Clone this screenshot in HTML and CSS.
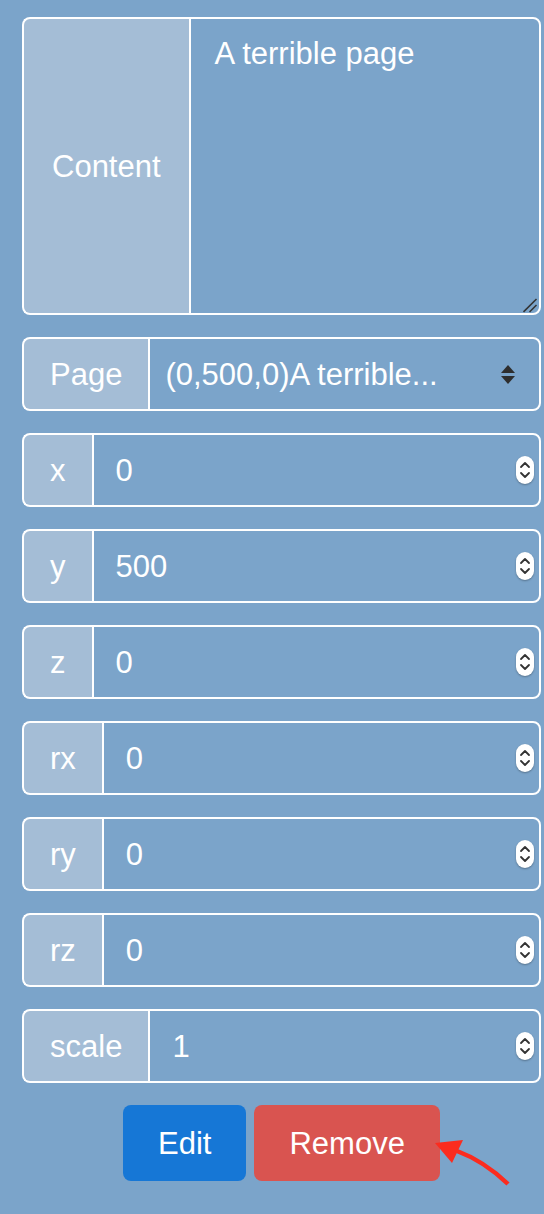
FILE: index.html
```html
<!DOCTYPE html>
<html lang="en">
<head>
<meta charset="utf-8">
<title>Element editor</title>
<link rel="stylesheet" href="styles.css">
</head>
<body>
<div class="panel">
  <div class="group group-area">
    <div class="addon">Content</div>
    <div class="field area">
      <span class="value">A terrible page</span>
      <svg class="resizer" width="16" height="16" viewBox="0 0 16 16" aria-hidden="true">
        <line x1="0.5" y1="15" x2="13.5" y2="2" stroke="#333" stroke-width="1.6"/>
        <line x1="6.5" y1="15" x2="13.5" y2="8" stroke="#333" stroke-width="1.6"/>
      </svg>
    </div>
  </div>

  <div class="group">
    <div class="addon">Page</div>
    <div class="field select">
      <span class="value">(0,500,0)A terrible...</span>
      <svg class="caret" width="16" height="20" viewBox="0 0 16 20" aria-hidden="true">
        <polygon points="1,9 8,1 15,9" fill="#2e2e2e"/>
        <polygon points="1,12 15,12 8,20" fill="#2e2e2e"/>
      </svg>
    </div>
  </div>

  <div class="group">
    <div class="addon">x</div>
    <div class="field number"><span class="value">0</span><span class="spin"><svg width="18" height="28" viewBox="0 0 18 28" aria-hidden="true"><polyline points="5,11 9,7 13,11" /><polyline points="5,17 9,21 13,17" /></svg></span></div>
  </div>
  <div class="group">
    <div class="addon">y</div>
    <div class="field number"><span class="value">500</span><span class="spin"><svg width="18" height="28" viewBox="0 0 18 28" aria-hidden="true"><polyline points="5,11 9,7 13,11" /><polyline points="5,17 9,21 13,17" /></svg></span></div>
  </div>
  <div class="group">
    <div class="addon">z</div>
    <div class="field number"><span class="value">0</span><span class="spin"><svg width="18" height="28" viewBox="0 0 18 28" aria-hidden="true"><polyline points="5,11 9,7 13,11" /><polyline points="5,17 9,21 13,17" /></svg></span></div>
  </div>
  <div class="group">
    <div class="addon">rx</div>
    <div class="field number"><span class="value">0</span><span class="spin"><svg width="18" height="28" viewBox="0 0 18 28" aria-hidden="true"><polyline points="5,11 9,7 13,11" /><polyline points="5,17 9,21 13,17" /></svg></span></div>
  </div>
  <div class="group">
    <div class="addon">ry</div>
    <div class="field number"><span class="value">0</span><span class="spin"><svg width="18" height="28" viewBox="0 0 18 28" aria-hidden="true"><polyline points="5,11 9,7 13,11" /><polyline points="5,17 9,21 13,17" /></svg></span></div>
  </div>
  <div class="group">
    <div class="addon">rz</div>
    <div class="field number"><span class="value">0</span><span class="spin"><svg width="18" height="28" viewBox="0 0 18 28" aria-hidden="true"><polyline points="5,11 9,7 13,11" /><polyline points="5,17 9,21 13,17" /></svg></span></div>
  </div>
  <div class="group">
    <div class="addon">scale</div>
    <div class="field number"><span class="value">1</span><span class="spin"><svg width="18" height="28" viewBox="0 0 18 28" aria-hidden="true"><polyline points="5,11 9,7 13,11" /><polyline points="5,17 9,21 13,17" /></svg></span></div>
  </div>

  <div class="actions">
    <button class="btn btn-edit" type="button">Edit</button>
    <button class="btn btn-remove" type="button">Remove</button>
    <svg class="pointer" width="84" height="60" viewBox="0 0 84 60" aria-hidden="true">
      <path d="M78 51 Q54 28 27 18" fill="none" stroke="#fb2c1f" stroke-width="4.5"/>
      <polygon points="5,10 33,7 22,30" fill="#fb2c1f"/>
    </svg>
  </div>
</div>
</body>
</html>
```

FILE: styles.css
```css
html, body {
  margin: 0;
  padding: 0;
  background: #7ba4ca;
  min-height: 100%;
}

body {
  font-family: "Liberation Sans", Arial, Helvetica, sans-serif;
  color: #fff;
  font-size: 31px;
  line-height: 43px;
}

.panel {
  width: 519px;
  padding: 17px 0 40px 22px;
}

.group {
  display: flex;
  height: 74px;
  margin-bottom: 22px;
}

.group-area {
  height: 298px;
}

.addon {
  flex: none;
  display: flex;
  align-items: center;
  justify-content: center;
  padding: 0 26px;
  background: #a4bdd6;
  border: 2px solid #fff;
  border-right: 0;
  border-radius: 8px 0 0 8px;
}

.group-area .addon {
  padding: 0 28px;
}

.field {
  flex: 1;
  min-width: 0;
  display: flex;
  align-items: center;
  border: 2px solid #fff;
  border-radius: 0 8px 8px 0;
  padding: 0 5px 0 22px;
  white-space: nowrap;
}

.area {
  position: relative;
  align-items: flex-start;
  padding: 13px 24px;
}

.resizer {
  position: absolute;
  right: 0;
  bottom: 0;
}

.select {
  padding: 0 23px 0 15px;
}

.value {
  flex: 1;
}

.caret {
  flex: none;
}

.spin {
  flex: none;
  width: 18px;
  height: 28px;
  border-radius: 9px;
  background: #fff;
  box-shadow: 0 1px 2px rgba(0, 0, 0, 0.3);
  display: flex;
}

.spin polyline {
  fill: none;
  stroke: #333;
  stroke-width: 1.8;
  stroke-linecap: round;
  stroke-linejoin: round;
}

.actions {
  position: relative;
  display: flex;
  justify-content: center;
  gap: 8px;
}

.btn {
  font: inherit;
  color: #fff;
  height: 76px;
  padding: 0 35px;
  border: 0;
  border-radius: 8px;
  cursor: pointer;
}

.btn-edit {
  background: #1677d6;
}

.btn-remove {
  background: #d95450;
}

.pointer {
  position: absolute;
  left: 408px;
  top: 28px;
}
```
